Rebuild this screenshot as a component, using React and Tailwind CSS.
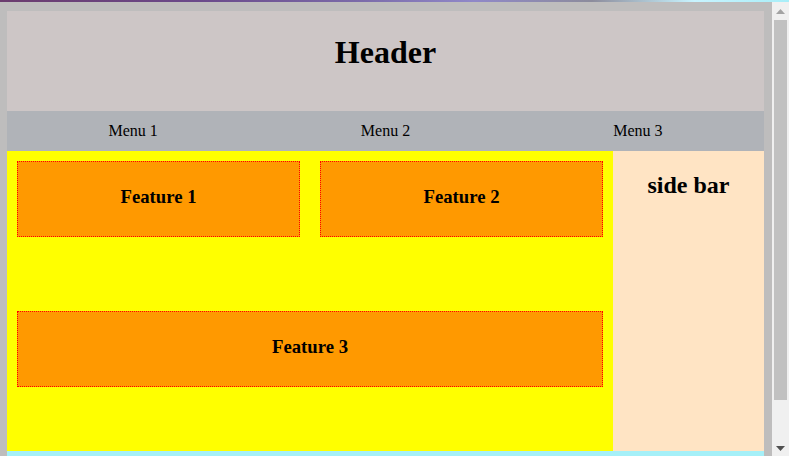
export default function App() {
  const serif = { fontFamily: '"Liberation Serif", "Times New Roman", serif' };
  return (
    <div className="relative flex w-[789px] h-[456px] overflow-hidden" style={serif}>
      <div className="w-[772px] h-[456px] bg-[#bebdbd] pt-[11px] pl-[7px] pr-[8px] overflow-hidden">
        <div className="h-[100px] bg-[#cdc6c6] flex items-center justify-center pb-[18px]">
          <h1 className="text-[32px] font-bold leading-none text-black">Header</h1>
        </div>
        <div className="h-[40px] bg-[#b0b3b8] grid grid-cols-3 items-center text-[16px] text-black">
          <div className="text-center">Menu 1</div>
          <div className="text-center">Menu 2</div>
          <div className="text-center">Menu 3</div>
        </div>
        <div className="flex h-[300px]">
          <div className="w-[606px] bg-[#ffff00] p-[10px]">
            <div className="grid grid-cols-2 gap-x-[20px]">
              <div className="h-[76px] bg-[#ff9900] border border-dotted border-[#ff0000] flex items-center justify-center">
                <h3 className="text-[18.72px] font-bold text-black -mt-[4px]">Feature 1</h3>
              </div>
              <div className="h-[76px] bg-[#ff9900] border border-dotted border-[#ff0000] flex items-center justify-center">
                <h3 className="text-[18.72px] font-bold text-black -mt-[4px]">Feature 2</h3>
              </div>
              <div className="col-span-2 mt-[74px] h-[76px] bg-[#ff9900] border border-dotted border-[#ff0000] flex items-center justify-center">
                <h3 className="text-[18.72px] font-bold text-black -mt-[4px]">Feature 3</h3>
              </div>
            </div>
          </div>
          <div className="w-[151px] bg-[#ffe4c4]">
            <h2 className="mt-[20px] text-[24px] font-bold leading-[28px] text-center text-black">side bar</h2>
          </div>
        </div>
        <div className="h-[40px] bg-[#a6f0f8]" />
      </div>
      <div className="relative w-[17px] h-[456px] bg-[#f0f0f0]">
        <svg className="absolute left-[4px] top-[9px]" width="9" height="5" viewBox="0 0 9 5">
          <polygon points="4.5,0 9,5 0,5" fill="#a3a3a3" />
        </svg>
        <div className="absolute left-[2px] top-[20px] w-[13px] h-[380px] bg-[#c1c1c1]" />
        <svg className="absolute left-[4px] top-[446px]" width="9" height="5" viewBox="0 0 9 5">
          <polygon points="0,0 9,0 4.5,5" fill="#505050" />
        </svg>
      </div>
      <div className="absolute left-0 top-0 w-[789px] h-[2px] bg-[linear-gradient(90deg,#6b3c6e_0%,#6a4a8a_25%,#7a6aa8_45%,#8f88c8_60%,#8c8c9c_75%,#c8f4ff_88%,#a8eef8_100%)]" />
    </div>
  );
}
